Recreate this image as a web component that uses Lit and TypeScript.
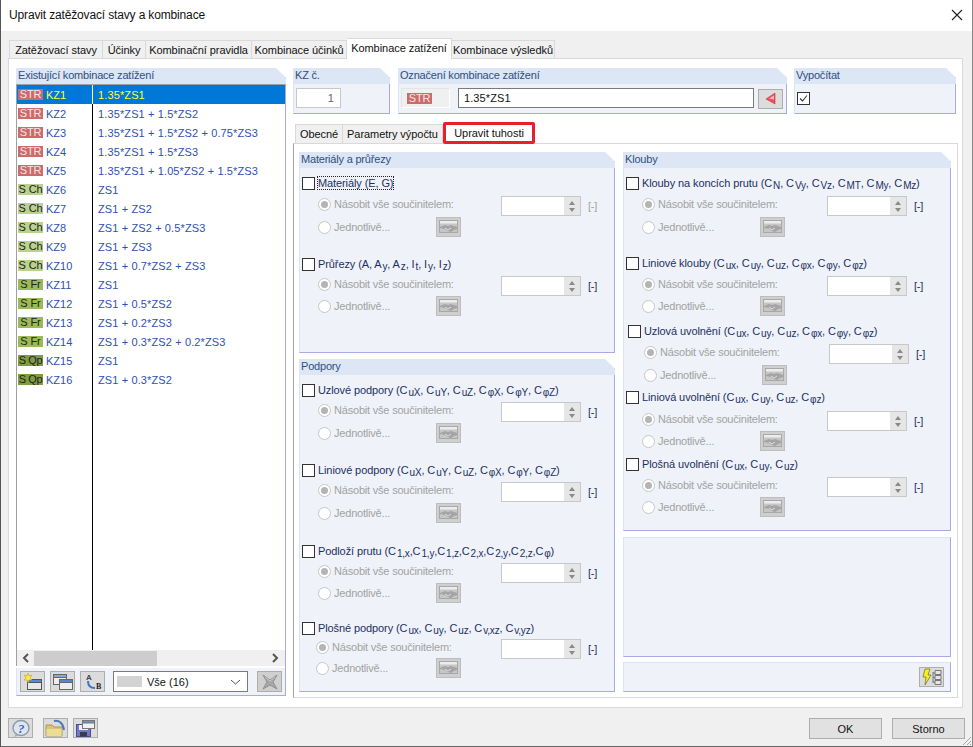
import { LitElement, html, css, svg } from "lit";
import { customElement } from "lit/decorators.js";

const rows: [string, string, string][] = [
  ["str", "KZ1", "1.35*ZS1"],
  ["str", "KZ2", "1.35*ZS1 + 1.5*ZS2"],
  ["str", "KZ3", "1.35*ZS1 + 1.5*ZS2 + 0.75*ZS3"],
  ["str", "KZ4", "1.35*ZS1 + 1.5*ZS3"],
  ["str", "KZ5", "1.35*ZS1 + 1.05*ZS2 + 1.5*ZS3"],
  ["sch", "KZ6", "ZS1"],
  ["sch", "KZ7", "ZS1 + ZS2"],
  ["sch", "KZ8", "ZS1 + ZS2 + 0.5*ZS3"],
  ["sch", "KZ9", "ZS1 + ZS3"],
  ["sch", "KZ10", "ZS1 + 0.7*ZS2 + ZS3"],
  ["sfr", "KZ11", "ZS1"],
  ["sfr", "KZ12", "ZS1 + 0.5*ZS2"],
  ["sfr", "KZ13", "ZS1 + 0.2*ZS3"],
  ["sfr", "KZ14", "ZS1 + 0.3*ZS2 + 0.2*ZS3"],
  ["sqp", "KZ15", "ZS1"],
  ["sqp", "KZ16", "ZS1 + 0.3*ZS2"],
];
const badgeText: Record<string, string> = { str: "STR", sch: "S Ch", sfr: "S Fr", sqp: "S Qp" };

const topTabs: [string, number, boolean][] = [
  ["Zatěžovací stavy", 94, false],
  ["Účinky", 43, false],
  ["Kombinační pravidla", 106, false],
  ["Kombinace účinků", 95, false],
  ["Kombinace zatížení", 105, true],
  ["Kombinace výsledků", 103, false],
];

interface Item { label: string; y: [number, number, number]; dx?: number; rdx?: number; focus?: boolean; greyUnit?: boolean; }

const g1: Item[] = [
  { label: "Materiály (E, G)", y: [183, 204, 227], focus: true, greyUnit: true },
  { label: "Průřezy (A, A|y|, A|z|, I|t|, I|y|, I|z|)", y: [264, 284, 306] },
];
const g2: Item[] = [
  { label: "Uzlové podpory (C|uX|, C|uY|, C|uZ|, C|φX|, C|φY|, C|φZ|)", y: [390, 410, 433] },
  { label: "Liniové podpory (C|uX|, C|uY|, C|uZ|, C|φX|, C|φY|, C|φZ|)", y: [470, 490, 513] },
  { label: "Podloží prutu (C|1,x|,C|1,y|,C|1,z|,C|2,x|,C|2,y|,C|2,z|,C|φ|)", y: [551, 571, 593] },
  { label: "Plošné podpory (C|ux|, C|uy|, C|uz|, C|v,xz|, C|v,yz|)", y: [628, 647, 668], rdx: -2 },
];
const g3: Item[] = [
  { label: "Klouby na koncích prutu (C|N|, C|Vy|, C|Vz|, C|MT|, C|My|, C|Mz|)", y: [183, 204, 227] },
  { label: "Liniové klouby (C|ux|, C|uy|, C|uz|, C|φx|, C|φy|, C|φz|)", y: [263, 284, 306] },
  { label: "Uzlová uvolnění (C|ux|, C|uy|, C|uz|, C|φx|, C|φy|, C|φz|)", y: [331, 352, 375], dx: 2 },
  { label: "Liniová uvolnění (C|ux|, C|uy|, C|uz|, C|φz|)", y: [397, 419, 441] },
  { label: "Plošná uvolnění (C|ux|, C|uy|, C|uz|)", y: [464, 485, 507] },
];

const handshake = svg`<svg width="21" height="15" viewBox="0 0 21 15"><rect x="1.5" y="1.5" width="18" height="12" fill="#c6c6c6" stroke="#a8a8a8"/><rect x="2" y="2" width="17" height="2.5" fill="#ececec"/><path d="M2 8l5-2 3 1 3-1 6 2v2l-3 1-3 2-3-1-3-2-5-1z" fill="#a4a4a4"/><path d="M7 9l3 2 3-2" fill="none" stroke="#dedede"/></svg>`;
const newIcon = svg`<svg width="23" height="18" viewBox="0 0 23 18"><rect x="6.5" y="6.5" width="14" height="10" fill="#e8e8e8" stroke="#555"/><rect x="6.5" y="6.5" width="14" height="3" fill="#5b8ac4" stroke="#555"/><path d="M7 0l1 3 3-1-2 3 2 2-3 0-1 3-1-3-3 0 2-2-2-3 3 1z" fill="#ffe93b" stroke="#b89b10" stroke-width=".5"/></svg>`;
const copyIcon = svg`<svg width="23" height="18" viewBox="0 0 23 18"><rect x="2.5" y="1.5" width="13" height="10" fill="#eee" stroke="#666"/><rect x="2.5" y="1.5" width="13" height="3" fill="#8aa8d0" stroke="#666"/><rect x="8.5" y="6.5" width="13" height="10" fill="#eee" stroke="#666"/><rect x="8.5" y="6.5" width="13" height="3" fill="#5b86c0" stroke="#666"/></svg>`;
const renumIcon = svg`<svg width="23" height="18" viewBox="0 0 23 18"><text x="5" y="7" font-size="8" font-family="Liberation Sans" font-weight="bold" fill="#445">A</text><text x="15" y="16" font-size="8" font-family="Liberation Serif" font-weight="bold" fill="#222">B</text><path d="M7 8c0 5 2 7 7 7" fill="none" stroke="#3b78c4" stroke-width="2"/></svg>`;
const delIcon = svg`<svg width="20" height="18" viewBox="0 0 20 18"><path d="M3 2l7 5 7-5-4 7 4 7-7-4-7 4 4-7z" fill="#a8a8a8" stroke="#909090"/><path d="M5 4l5 4 5-4" fill="none" stroke="#c8c8c8"/></svg>`;
const arrowIcon = svg`<svg width="14" height="14" viewBox="0 0 14 14"><path d="M11 1v11L2 7z" fill="#f0505a" stroke="#d03040" stroke-width=".6"/><path d="M10 3.5v4L5 6.5z" fill="#f9c0c4"/></svg>`;
const helpIcon = svg`<svg width="23" height="19" viewBox="0 0 23 19"><ellipse cx="12" cy="9" rx="8" ry="7.5" fill="#dfe5ee" stroke="#8b98aa" stroke-width="1.4"/><path d="M7 15l-2 3 5-2z" fill="#9aa8bc"/><text x="9" y="14" font-size="13" font-family="Liberation Serif" font-style="italic" font-weight="bold" fill="#3a6ab8">?</text></svg>`;
const openIcon = svg`<svg width="23" height="19" viewBox="0 0 23 19"><path d="M2 6h6l2 2h8v9H2z" fill="#d9c477" stroke="#ab9a55"/><path d="M2.5 10h15v7h-15z" fill="#ecdc96"/><path d="M10 2c5-1 9 2 10 9" fill="none" stroke="#4a78b8" stroke-width="2"/></svg>`;
const saveIcon = svg`<svg width="23" height="19" viewBox="0 0 23 19"><rect x="2.5" y="5.5" width="14" height="12" fill="#7378c0" stroke="#4b4f8f"/><rect x="5" y="6" width="9" height="5" fill="#eef"/><rect x="6" y="13" width="7" height="4.5" fill="#3a3a55"/><rect x="8.5" y="1.5" width="12" height="8" fill="#f2f2f2" stroke="#777"/><rect x="8.5" y="1.5" width="12" height="2.5" fill="#6a92c8" stroke="#777"/></svg>`;
const calcIcon = svg`<svg width="21" height="19" viewBox="0 0 21 19"><path d="M4 1h5L7 7h3l-6 10 1-8H2z" fill="#f4f020" stroke="#6c6c20" stroke-width=".7"/><path d="M12 4v11M12 5h2M12 9.5h2M12 14h2" fill="none" stroke="#777"/><path d="M14 2.5h6v4h-6zM14 7.5h6v4h-6zM14 12.5h6v4h-6z" fill="#e6e6e6" stroke="#777"/></svg>`;

@customElement("app-root")
export class AppRoot extends LitElement {
  static styles = css`
    :host { display: block; width: 973px; height: 747px; overflow: hidden; font-family: "Liberation Sans", Arial, sans-serif; font-size: 11px; letter-spacing: -0.2px; color: #111; }
    * { box-sizing: border-box; }
    .win { width: 973px; height: 747px; background: #f0f0f0; border-left: 1px solid #555; border-bottom: 1px solid #666; border-right: 1px solid #888; display: flex; flex-direction: column; position: relative; }
    .title { height: 31px; background: #fff; display: flex; align-items: center; justify-content: space-between; padding: 0 9px 1px 8px; font-size: 12px; letter-spacing: -0.15px; flex: none; }
    .strip { height: 27px; flex: none; display: flex; align-items: flex-end; padding-left: 8px; position: relative; z-index: 1; }
    .tab { height: 18px; background: #f0f0f0; border: 1px solid #d9d9d9; border-bottom: none; border-left: none; display: flex; align-items: center; justify-content: center; white-space: nowrap; flex: none; letter-spacing: -0.05px; }
    .tab:first-child { border-left: 1px solid #d9d9d9; }
    .tab.on { height: 21px; background: #fff; margin-bottom: -1px; padding-bottom: 2px; }
    .panel { width: 955px; margin-left: 7px; height: 650px; flex: none; background: #fff; border: 1px solid #d9d9d9; padding: 9px 0 0 7px; display: flex; gap: 7px; }
    .group { background: #eff3f9; border-right: 1px solid #a9a9e6; border-bottom: 1px solid #a9a9e6; border-left: 1px solid #dbe4f2; display: flex; flex-direction: column; clip-path: polygon(0 0, calc(100% - 10px) 0, 100% 10px, 100% 100%, 0 100%); flex: none; }
    .head { height: 16px; flex: none; background: #dce6f4; color: #2f4f80; line-height: 15px; margin-left: -1px; margin-right: -1px; white-space: nowrap; padding: 0 1px 0 2px; }
    .plain { background: #eff3f9; border: 1px solid #dbe4f2; border-right-color: #a9a9e6; border-bottom-color: #a9a9e6; flex: none; display: flex; align-items: center; justify-content: flex-end; }
    .left { width: 270px; height: 628px; }
    .list { height: 566px; background: #fff; border-top: 1px solid #a0a0a0; border-left: 1px solid #a0a0a0; margin-left: -1px; display: flex; flex-direction: column; flex: none; }
    .rowline { height: 19px; flex: none; display: flex; align-items: center; color: #2e50b4; }
    .rowline.sel { background: #0078d7; color: #ffff30; }
    .rowline .b { margin-left: 1px; }
    .b { width: 25px; height: 11px; flex: none; display: flex; align-items: center; justify-content: center; font-size: 11px; line-height: 11px; color: #222; white-space: nowrap; letter-spacing: -0.1px; }
    .b.str { background: #cd6a6a; color: #f5e6e6; }
    .b.sch { background: #bad28d; }
    .b.sfr { background: #9abb55; }
    .b.sqp { background: #7f9c40; letter-spacing: -0.4px; }
    .id { width: 50px; flex: none; padding-left: 3px; height: 100%; display: flex; align-items: center; border-right: 1px solid #000; letter-spacing: 0; }
    .sel .id { border-right-color: #fff; }
    .fx { padding-left: 5px; white-space: nowrap; letter-spacing: 0.12px; }
    .fill { flex: 1; display: flex; }
    .fill i { display: block; width: 76px; border-right: 1px solid #000; }
    .sb { height: 16px; background: #f0f0f0; margin-left: -1px; flex: none; display: flex; align-items: center; justify-content: space-between; padding: 0 6px 0 5px; border-left: 1px solid #a0a0a0; }
    .thumb { width: 123px; height: 15px; background: #cdcdcd; margin-right: 110px; }
    .gap2 { height: 2px; background: #fff; flex: none; margin-left: -1px; }
    .tools { flex: 1; display: flex; align-items: center; padding: 0 0 0 3px; gap: 5px; }
    .ib { width: 25px; height: 21px; background: #dcdcdc; border: 1px solid #adadad; display: flex; align-items: center; justify-content: center; flex: none; }
    .ib.dis { background: #cfcfcf; }
    .sel2 { width: 135px; height: 21px; margin-left: 3px; margin-right: 4px; background: #fff; border: 1px solid #7a7a7a; display: flex; align-items: center; padding-left: 3px; flex: none; position: relative; letter-spacing: 0; }
    .sel2 .sw { width: 25px; height: 11px; background: #d3d3d3; margin-right: 5px; }
    .sel2 svg { position: absolute; right: 6px; top: 7px; }
    .right { width: 665px; flex: none; display: flex; flex-direction: column; }
    .top { display: flex; height: 46px; flex: none; }
    .top .group { height: 46px; }
    .inp { height: 20px; background: #fff; display: flex; align-items: center; letter-spacing: 0.1px; }
    .nr { width: 45px; margin: 4px 0 0 2px; border: 1px solid #c8c8c8; justify-content: flex-end; padding-right: 6px; color: #666; }
    .strbox { width: 49px; height: 20px; margin: 4px 0 0 2px; background: #f0f0f0; border: 1px solid #e4e4e4; border-right-color: #fff; border-bottom-color: #fff; display: flex; align-items: center; padding-left: 5px; flex: none; }
    .desc { width: 296px; margin: 4px 0 0 8px; border: 1px solid #7a7a7a; padding-left: 5px; flex: none; }
    .row-b { display: flex; }
    .chk { width: 13px; height: 13px; border: 1px solid #333; background: #fff; flex: none; display: flex; }
    .itabs { height: 19px; margin-top: 10px; flex: none; display: flex; align-items: flex-end; padding-left: 2px; position: relative; z-index: 1; }
    .itab { height: 19px; background: #f0f0f0; border-right: 1px solid #d9d9d9; border-top: 1px solid #d9d9d9; display: flex; align-items: center; justify-content: center; white-space: nowrap; flex: none; letter-spacing: -0.05px; }
    .itab.first { border-left: 1px solid #d9d9d9; }
    .itab.on { height: 22px; width: 92px; background: #fff; border: 3px solid #e8202e; border-radius: 2px; margin-bottom: -1px; padding-bottom: 1px; }
    .ipanel { height: 555px; flex: none; border-top: 1px solid #d9d9d9; border-left: 1px solid #a5a5a5; border-right: 1px solid #d9d9d9; border-bottom: 1px solid #d9d9d9; padding: 8px 0 0 5px; display: flex; gap: 8px; }
    .col { display: flex; flex-direction: column; flex: none; }
    .g1 { width: 316px; height: 201px; }
    .g2 { width: 316px; height: 333px; margin-top: 6px; }
    .g3 { width: 328px; height: 379px; }
    .g4 { width: 328px; height: 120px; margin-top: 6px; }
    .g5 { width: 328px; height: 30px; margin-top: 5px; padding-right: 6px; }
    .g5 .ib { height: 20px; }
    .irow { height: 20px; display: flex; align-items: center; flex: none; white-space: nowrap; }
    .lab { color: #1d2f5f; display: inline-block; line-height: 14px; padding-left: 3px; letter-spacing: -0.1px; }
    .lab.focus { outline: 1px dotted #222; outline-offset: -1px; padding: 0 1px; margin-left: 2px; }
    sub { font-size: 10px; line-height: 0; vertical-align: -2px; margin-left: 1px; letter-spacing: -0.2px; }
    .radio { width: 13px; height: 13px; border-radius: 50%; border: 1px solid #c6c6c6; background: #fff; flex: none; display: flex; align-items: center; justify-content: center; margin-right: 3px; }
    .radio.on::after { content: ""; width: 7px; height: 7px; border-radius: 50%; background: #b4b4b4; }
    .dim { color: #a2a2a2; flex: none; }
    .spin { width: 80px; height: 20px; background: #fff; border: 1px solid #c8c8c8; flex: none; display: flex; justify-content: flex-end; margin-top: 4px; }
    .spin div { width: 16px; background: #e6e6e6; display: flex; flex-direction: column; justify-content: center; align-items: center; gap: 3px; }
    .up { width: 0; height: 0; border-left: 3.5px solid transparent; border-right: 3.5px solid transparent; border-bottom: 4px solid #8a8a8a; }
    .down { width: 0; height: 0; border-left: 3.5px solid transparent; border-right: 3.5px solid transparent; border-top: 4px solid #8a8a8a; }
    .unit { margin: 4px 0 0 7px; color: #1d2f5f; }
    .unit.grey { color: #a2a2a2; }
    .bbtn { width: 25px; height: 20px; background: #cfcfcf; border: 1px solid #bdbdbd; flex: none; display: flex; align-items: center; justify-content: center; margin-top: -1px; }
    .foot { flex: 1; display: flex; align-items: flex-start; padding: 10px 7px 0 7px; }
    .foot .ib { height: 20px; margin-right: 5px; }
    .foot .ib.gapr { margin-right: 10px; }
    .btn { width: 73px; height: 21px; background: #e1e1e1; border: 1px solid #adadad; display: flex; align-items: center; justify-content: center; margin-left: 10px; letter-spacing: 0; }
    .sp { flex: 1; }
    .grip { position: absolute; right: 0; bottom: 0; width: 12px; height: 12px; }
  `;

  private lab(s: string) {
    return s.split("|").map((p, i) => (i % 2 ? html`<sub>${p}</sub>` : p));
  }

  private item(it: Item, prev: number, lw: number, bw: number) {
    const dx = it.dx ?? 0;
    const rdx = it.rdx ?? 0;
    return html`
      <div class="irow" style="margin-top:${it.y[0] - prev - 20}px;padding-left:${2 + dx}px">
        <span class="chk"></span><span class="lab ${it.focus ? "focus" : ""}">${this.lab(it.label)}</span>
      </div>
      <div class="irow" style="margin-top:${it.y[1] - it.y[0] - 20}px;padding-left:${18 + dx + rdx}px">
        <span class="radio on"></span><span class="dim" style="width:${lw - rdx}px">Násobit vše součinitelem:</span>
        <span class="spin"><div><span class="up"></span><span class="down"></span></div></span>
        <span class="unit ${it.greyUnit ? "grey" : ""}">[-]</span>
      </div>
      <div class="irow" style="margin-top:${it.y[2] - it.y[1] - 20}px;padding-left:${18 + dx + rdx}px">
        <span class="radio"></span><span class="dim" style="width:${bw - rdx}px">Jednotlivě...</span>
        <span class="bbtn">${handshake}</span>
      </div>`;
  }

  private items(list: Item[], start: number, lw: number, bw: number) {
    let prev = start;
    return list.map((it) => {
      const t = this.item(it, prev, lw, bw);
      prev = it.y[2];
      return t;
    });
  }

  render() {
    return html`
      <div class="win">
        <div class="title">
          <span>Upravit zatěžovací stavy a kombinace</span>
          <svg width="12" height="12" viewBox="0 0 12 12"><path d="M1 1l10 10M11 1L1 11" stroke="#222" stroke-width="1.1"/></svg>
        </div>
        <div class="strip">
          ${topTabs.map(([t, w, on]) => html`<div class="tab ${on ? "on" : ""}" style="width:${w}px">${t}</div>`)}
        </div>
        <div class="panel">
          <div class="group left">
            <div class="head">Existující kombinace zatížení</div>
            <div class="list">
              ${rows.map(
                ([k, id, fx], i) => html`<div class="rowline ${i === 0 ? "sel" : ""}">
                  <span class="b ${k}">${badgeText[k]}</span><span class="id">${id}</span><span class="fx">${fx}</span>
                </div>`
              )}
              <div class="fill"><i></i></div>
            </div>
            <div class="sb">
              <svg width="8" height="10" viewBox="0 0 8 10"><path d="M6 1L2 5l4 4" fill="none" stroke="#555" stroke-width="2"/></svg>
              <span class="thumb"></span>
              <svg width="8" height="10" viewBox="0 0 8 10"><path d="M2 1l4 4-4 4" fill="none" stroke="#555" stroke-width="2"/></svg>
            </div>
            <div class="gap2"></div>
            <div class="tools">
              <span class="ib">${newIcon}</span><span class="ib">${copyIcon}</span><span class="ib">${renumIcon}</span>
              <span class="sel2"><span class="sw"></span>Vše (16)
                <svg width="11" height="6" viewBox="0 0 11 6"><path d="M1 1l4.5 4L10 1" fill="none" stroke="#555"/></svg>
              </span>
              <span class="ib dis">${delIcon}</span>
            </div>
          </div>

          <div class="right">
            <div class="top">
              <div class="group" style="width:97px">
                <div class="head">KZ č.</div>
                <div class="inp nr">1</div>
              </div>
              <div class="group" style="width:389px;margin-left:8px">
                <div class="head">Označení kombinace zatížení</div>
                <div class="row-b">
                  <span class="strbox"><span class="b str">STR</span></span>
                  <div class="inp desc">1.35*ZS1</div>
                  <span class="ib" style="margin:5px 0 0 4px;height:20px">${arrowIcon}</span>
                </div>
              </div>
              <div class="group" style="width:162px;margin-left:7px">
                <div class="head">Vypočítat</div>
                <div style="padding:8px 0 0 2px"><span class="chk"><svg width="11" height="11" viewBox="0 0 11 11"><path d="M2 5.5l2.5 2.5L9 2.5" fill="none" stroke="#333" stroke-width="1.1"/></svg></span></div>
              </div>
            </div>
            <div class="itabs">
              <div class="itab first" style="width:48px">Obecné</div>
              <div class="itab" style="width:100px">Parametry výpočtu</div>
              <div class="itab on">Upravit tuhosti</div>
            </div>
            <div class="ipanel">
              <div class="col">
                <div class="group g1">
                  <div class="head">Materiály a průřezy</div>
                  ${this.items(g1, 158, 167, 102)}
                </div>
                <div class="group g2">
                  <div class="head">Podpory</div>
                  ${this.items(g2, 365, 167, 102)}
                </div>
              </div>
              <div class="col">
                <div class="group g3">
                  <div class="head">Klouby</div>
                  ${this.items(g3, 158, 169, 102)}
                </div>
                <div class="plain g4"></div>
                <div class="plain g5"><span class="ib">${calcIcon}</span></div>
              </div>
            </div>
          </div>
        </div>
        <div class="foot">
          <span class="ib gapr">${helpIcon}</span><span class="ib">${openIcon}</span><span class="ib">${saveIcon}</span>
          <span class="sp"></span>
          <span class="btn">OK</span><span class="btn">Storno</span>
        </div>
        <svg class="grip" viewBox="0 0 12 12"><path d="M11 3L3 11M11 7l-4 4M11 10l-1 1" stroke="#aaa" fill="none"/></svg>
      </div>`;
  }
}
